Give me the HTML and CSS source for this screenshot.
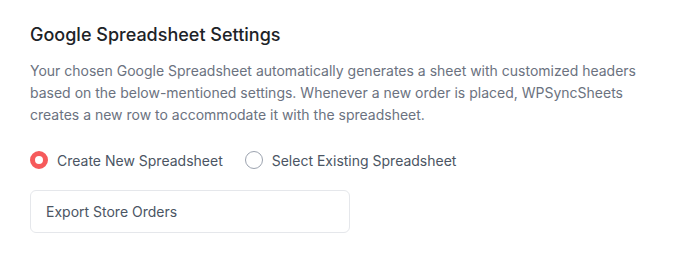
FILE: index.html
```html
<!DOCTYPE html>
<html lang="en">
<head>
    <meta charset="UTF-8">
    <meta name="viewport" content="width=device-width, initial-scale=1.0">
    <title>Google Spreadsheet Settings</title>
    <link rel="stylesheet" href="styles.css">
</head>
<body>
    <div class="settings">
        <h2>Google Spreadsheet Settings</h2>
        <p class="desc">Your chosen Google Spreadsheet automatically generates a sheet with customized headers based on the below-mentioned settings. Whenever a new order is placed, WPSyncSheets creates a new row to accommodate it with the spreadsheet.</p>

        <div class="options">
            <label class="option"><input type="radio" name="sheet" checked> Create New Spreadsheet</label>
            <label class="option"><input type="radio" name="sheet"> Select Existing Spreadsheet</label>
        </div>

        <input type="text" class="sheet-name" value="Export Store Orders">
    </div>
</body>
</html>
```

FILE: styles.css
```css
body {
    font-family: Inter, "Noto Sans", sans-serif;
    margin: 0;
    padding: 0;
    background-color: #fff;
    color: #333;
}

.settings {
    padding: 24px 30px;
}

h2 {
    font-size: 18px;
    font-weight: 500;
    color: #1d2327;
    margin: 0 0 14px;
    line-height: 22px;
}

.desc {
    font-size: 14px;
    line-height: 22px;
    color: #6b7280;
    margin: 0 0 25px;
    max-width: 640px;
}

.options {
    display: flex;
    gap: 22px;
    margin-bottom: 21px;
}

.option {
    display: flex;
    align-items: center;
    gap: 9px;
    font-size: 14px;
    color: #4b5563;
    cursor: pointer;
}

.option input[type="radio"] {
    appearance: none;
    margin: 0;
    width: 18px;
    height: 18px;
    border-radius: 50%;
    border: 1.5px solid #9ca3af;
    background-color: #fff;
}

.option input[type="radio"]:checked {
    border: 5px solid #f65a5b;
}

.sheet-name {
    display: block;
    width: 320px;
    height: 43px;
    box-sizing: border-box;
    padding: 0 15px;
    border: 1px solid #e5e7eb;
    border-radius: 6px;
    font-family: inherit;
    font-size: 14px;
    color: #4b5563;
}
```
